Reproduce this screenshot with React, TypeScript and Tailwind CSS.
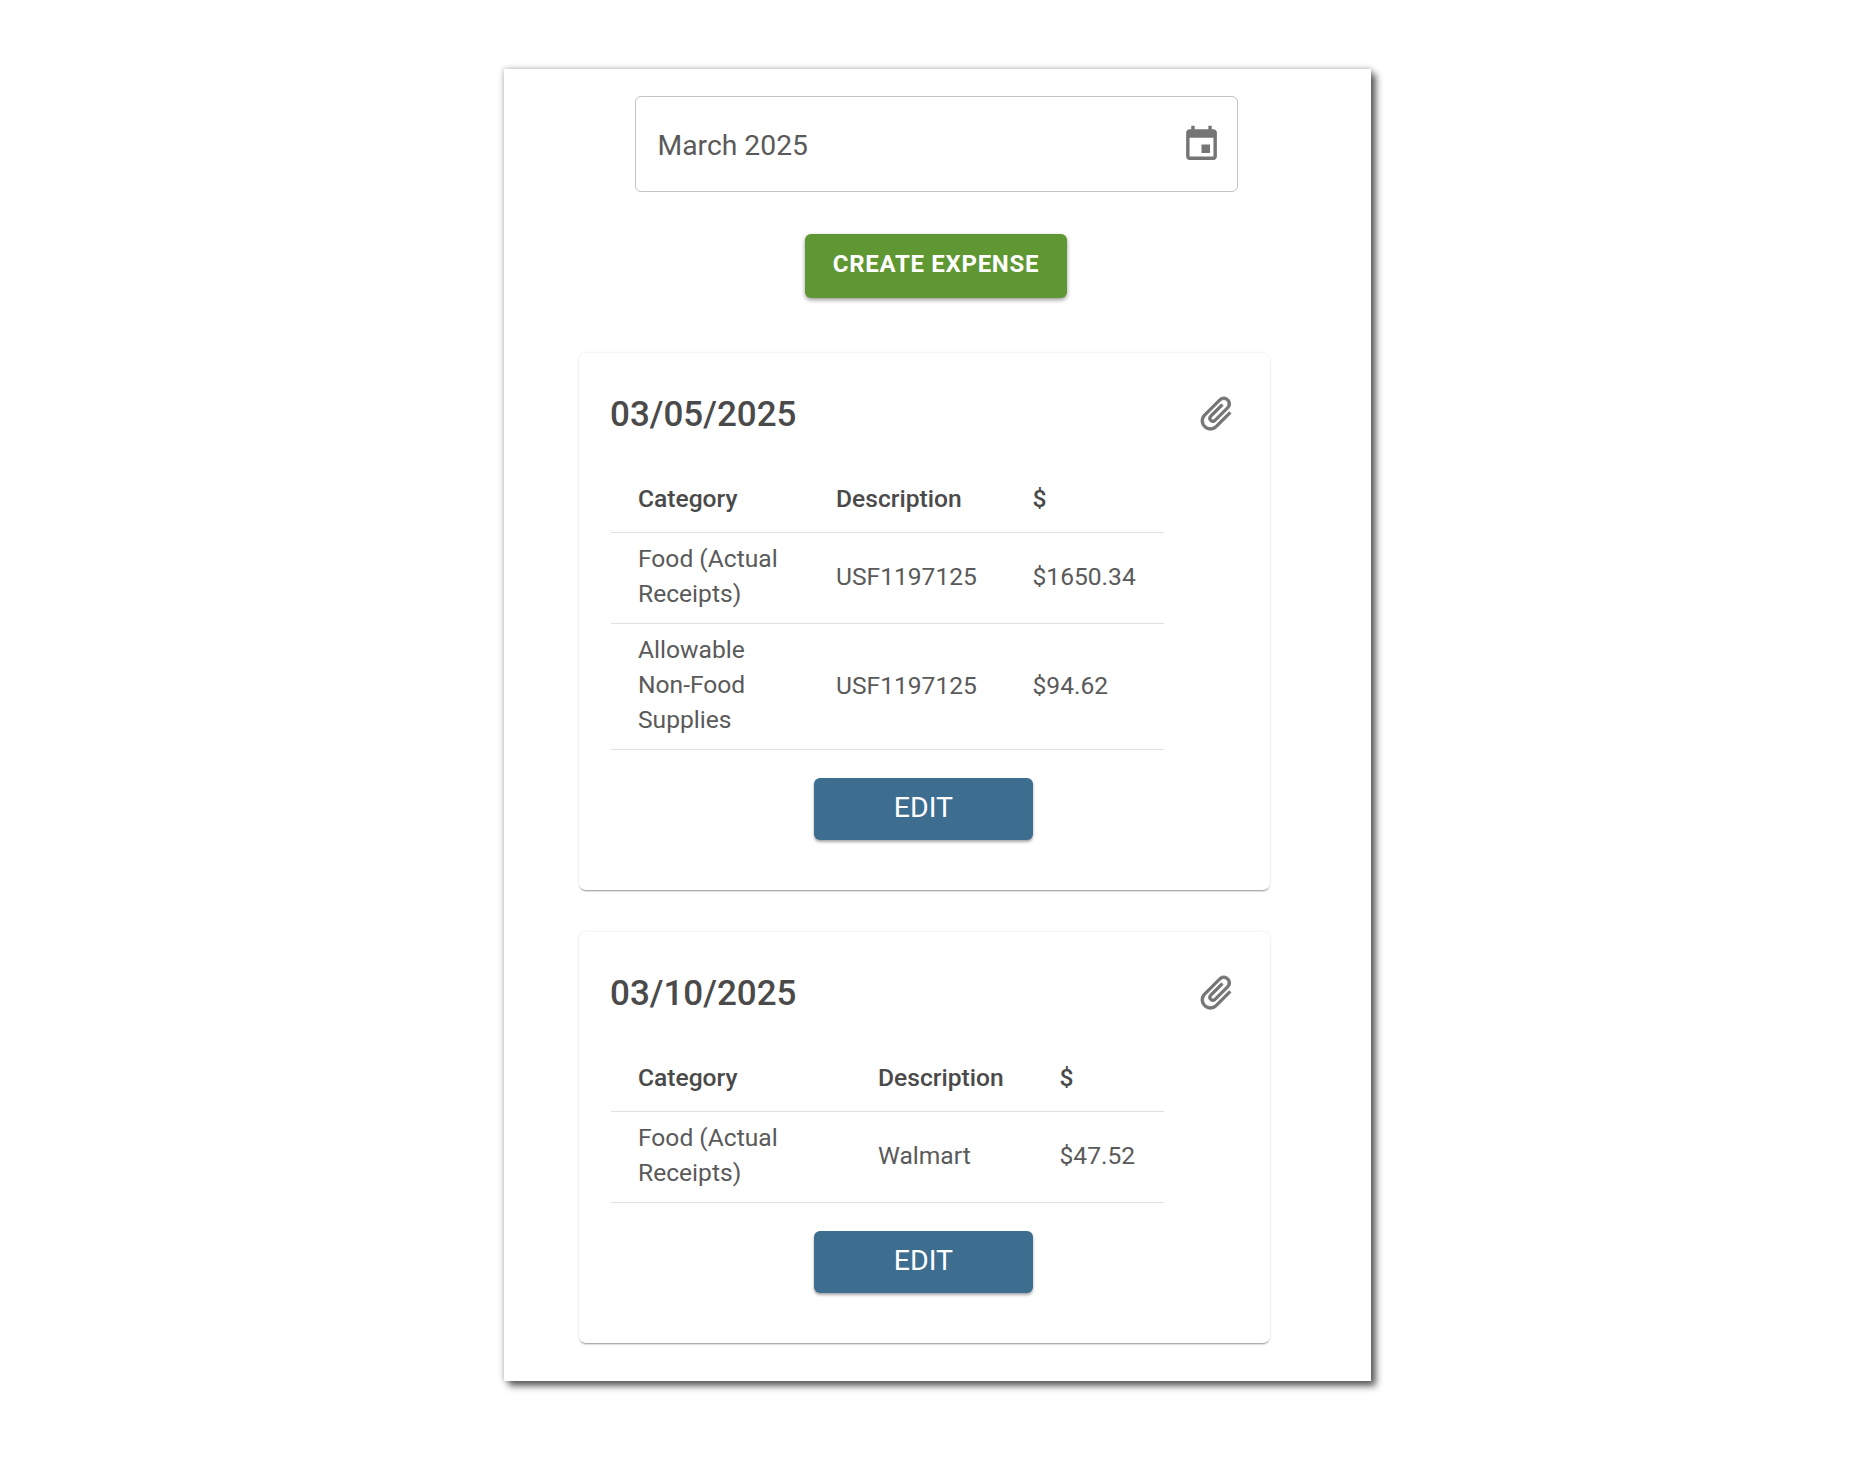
const font = { fontFamily: 'Roboto, sans-serif' };

interface ExpenseRow {
  category: string;
  description: string;
  amount: string;
}

interface ExpenseCardProps {
  date: string;
  rows: ExpenseRow[];
  widths: [string, string];
}

function CalendarIcon() {
  return (
    <svg viewBox="0 0 24 24" className="h-[41px] w-[41px] fill-[#757575]">
      <path d="M17 12h-5v5h5v-5zM16 1v2H8V1H6v2H5c-1.11 0-1.99.9-1.99 2L3 19c0 1.1.89 2 2 2h14c1.1 0 2-.9 2-2V5c0-1.1-.9-2-2-2h-1V1h-2zm3 18H5V8h14v11z" />
    </svg>
  );
}

function ClipIcon() {
  return (
    <svg viewBox="0 0 24 24" className="-mt-[1px] h-[41px] w-[41px] rotate-45 fill-[#757575] stroke-[#757575] stroke-[0.5]">
      <path d="M16.5 6v11.5c0 2.21-1.79 4-4 4s-4-1.79-4-4V5c0-1.38 1.12-2.5 2.5-2.5s2.5 1.12 2.5 2.5v10.5c0 .55-.45 1-1 1s-1-.45-1-1V6H10v9.5c0 1.38 1.12 2.5 2.5 2.5s2.5-1.12 2.5-2.5V5c0-2.21-1.79-4-4-4S7 2.79 7 5v12.5c0 3.04 2.46 5.5 5.5 5.5s5.5-2.46 5.5-5.5V6h-1.5z" />
    </svg>
  );
}

function ExpenseCard({ date, rows, widths }: ExpenseCardProps) {
  return (
    <div className="flex w-[691px] flex-col rounded-[7px] bg-white px-[32px] pb-[50px] shadow-[0_2px_2px_-1px_rgba(0,0,0,0.4),0_0_3px_rgba(0,0,0,0.1)]">
      <div className="flex h-[113px] items-center justify-between pt-[9px] pr-[1px]">
        <span className="-ml-[1px] pt-[2px] text-[35px] font-medium text-[#4a4a4a]">{date}</span>
        <ClipIcon />
      </div>
      <table className="w-[553px] table-fixed border-collapse text-[24.6px] leading-[34.7px] text-[#5a5a5a]">
        <colgroup>
          <col style={{ width: widths[0] }} />
          <col style={{ width: widths[1] }} />
          <col />
        </colgroup>
        <thead>
          <tr className="h-[66px] border-b-[1.5px] border-[#e0e0e0] text-left text-[#4a4a4a]">
            <th className="px-[27px] pt-[1px] font-medium">Category</th>
            <th className="px-[27px] pt-[1px] font-medium">Description</th>
            <th className="pl-[26.5px] pt-[1px] font-medium">$</th>
          </tr>
        </thead>
        <tbody>
          {rows.map((row) => (
            <tr key={row.category} className="border-b-[1.5px] border-[#e0e0e0]">
              <td className="px-[27px] pt-[9.5px] pb-[11.5px]">{row.category}</td>
              <td className="px-[27px] py-[10.5px]">{row.description}</td>
              <td className="pl-[26.5px] py-[10.5px]">{row.amount}</td>
            </tr>
          ))}
        </tbody>
      </table>
      <div className="mt-[28px] mr-[2px] flex justify-center">
        <button className="h-[62px] w-[219px] rounded-[6px] bg-[#3d6d8f] pb-[1px] text-[28.5px] text-white shadow-[0_2px_3px_rgba(0,0,0,0.35)]">
          EDIT
        </button>
      </div>
    </div>
  );
}

export default function App() {
  return (
    <div className="min-h-[1459px] bg-white pt-[69px]" style={font}>
      <div className="mx-auto flex h-[1312px] w-[867px] flex-col bg-white shadow-[5px_5px_7px_rgba(0,0,0,0.6),0_0_6px_rgba(0,0,0,0.3)]">
        <div className="mt-[27px] mr-[3px] flex justify-center">
          <div className="flex h-[96px] w-[603px] items-center justify-between rounded-[6px] border border-[#c4c4c4] pt-[3px] pl-[22px] pr-[15px]">
            <span className="pt-[1px] text-[28.3px] text-[#5a5a5a]">March 2025</span>
            <span className="-mt-[3px] flex">
              <CalendarIcon />
            </span>
          </div>
        </div>
        <div className="mt-[42px] mr-[3px] flex justify-center">
          <button className="h-[64px] w-[262px] rounded-[6px] bg-[#5f9732] pb-[5px] text-[24px] font-bold tracking-[0.7px] text-white shadow-[0_2px_4px_rgba(0,0,0,0.4)]">
            CREATE EXPENSE
          </button>
        </div>
        <div className="ml-[75px] mt-[55px] flex flex-col gap-[42px]">
          <ExpenseCard
            date="03/05/2025"
            widths={['198px', '197px']}
            rows={[
              { category: 'Food (Actual Receipts)', description: 'USF1197125', amount: '$1650.34' },
              { category: 'Allowable Non-Food Supplies', description: 'USF1197125', amount: '$94.62' },
            ]}
          />
          <ExpenseCard
            date="03/10/2025"
            widths={['240px', '182px']}
            rows={[{ category: 'Food (Actual Receipts)', description: 'Walmart', amount: '$47.52' }]}
          />
        </div>
      </div>
    </div>
  );
}
